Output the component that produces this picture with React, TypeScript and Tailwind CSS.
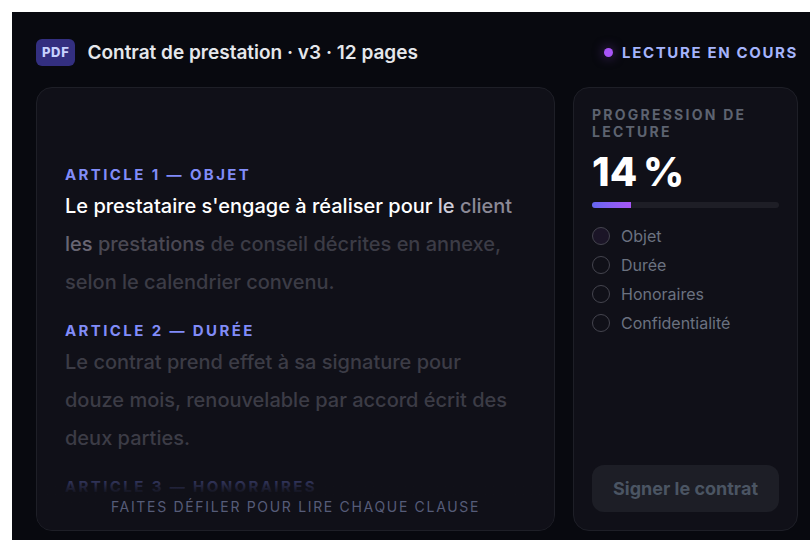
import { useState } from "react";

const ARTICLES = [
  {
    title: "ARTICLE 1 — OBJET",
    parts: [
      { text: "Le prestataire s'engage à réaliser pour ", tone: "text-white" },
      { text: "le ", tone: "text-[#cfcddb]" },
      { text: "client ", tone: "text-[#8b8996]" },
      { text: "les ", tone: "text-[#686673]" },
      { text: "prestations ", tone: "text-[#4a4853]" },
      { text: "de conseil décrites en annexe, ", tone: "text-[#3c3c46]" },
      { text: "selon le calendrier convenu.", tone: "text-[#3c3c46]" },
    ],
  },
  {
    title: "ARTICLE 2 — DURÉE",
    parts: [
      {
        text: "Le contrat prend effet à sa signature pour douze mois, renouvelable par accord écrit des deux parties.",
        tone: "text-[#3c3c46]",
      },
    ],
  },
  { title: "ARTICLE 3 — HONORAIRES", parts: [] },
];

const CLAUSES = [
  { label: "Objet", fill: "bg-[#1b1527]" },
  { label: "Durée", fill: "bg-transparent" },
  { label: "Honoraires", fill: "bg-transparent" },
  { label: "Confidentialité", fill: "bg-transparent" },
];

function Header() {
  return (
    <header className="flex h-[27px] items-center gap-3">
      <span className="flex h-[27px] items-center rounded-md bg-[#332f80] px-[6px] text-[13px] font-extrabold tracking-wider text-[#c7d2fe]">
        PDF
      </span>
      <h1 className="pt-[2px] text-[19px] font-semibold text-[#e5e7eb]">Contrat de prestation · v3 · 12 pages</h1>
      <p className="ml-auto flex items-center gap-[9px] text-[15px] font-bold tracking-[0.11em] text-[#a5b4fc]">
        <span className="h-[9px] w-[9px] rounded-full bg-[#a855f7] shadow-[0_0_12px_#a855f780]" />
        <span className="pt-[2px]">LECTURE EN COURS</span>
      </p>
    </header>
  );
}

function Document() {
  return (
    <section className="relative min-w-0 flex-1 overflow-hidden rounded-2xl border border-[#1e1f27] bg-[#101018]">
      <div className="h-0 min-h-full space-y-[18px] overflow-hidden pt-[75px] pr-9 pl-7">
        {ARTICLES.map((article) => (
          <article key={article.title}>
            <h2 className="text-[15px] leading-6 font-bold tracking-[0.16em] text-[#818cf8]">{article.title}</h2>
            <p className="text-[20px] leading-[38px] font-medium">
              {article.parts.map((part) => (
                <span key={part.text} className={part.tone}>
                  {part.text}
                </span>
              ))}
            </p>
          </article>
        ))}
      </div>
      {/* Fade under the scroll hint */}
      <div className="absolute inset-x-0 bottom-0 flex h-20 items-end justify-center bg-linear-to-t from-[#101018] from-45% to-transparent pb-[13px]">
        <p className="text-[14px] leading-5 tracking-[0.12em] text-[#565c78]">FAITES DÉFILER POUR LIRE CHAQUE CLAUSE</p>
      </div>
    </section>
  );
}

function Progress({ value }: { value: number }) {
  const [read, setRead] = useState<string[]>([]);

  function toggle(clause: string) {
    setRead(read.includes(clause) ? read.filter((c) => c !== clause) : [...read, clause]);
  }

  return (
    <aside className="flex w-[225px] shrink-0 flex-col rounded-2xl border border-[#1e1f27] bg-[#101018] p-[18px]">
      <h2 className="text-[14px] leading-[17px] font-bold tracking-[0.16em] text-[#5d6370]">PROGRESSION DE LECTURE</h2>
      <p className="mt-2 text-[40px] leading-[48px] font-extrabold text-white">{value}{"\u202f"}%</p>
      <div
        role="progressbar"
        aria-label="Progression de lecture"
        aria-valuenow={value}
        className="mt-[6px] h-[6px] overflow-hidden rounded-full bg-[#1e1e26]"
      >
        <div className="h-full w-[21%] bg-linear-to-r from-[#6366f1] to-[#a855f7]" />
      </div>
      <ul className="mt-[18px] space-y-[9px]">
        {CLAUSES.map(({ label, fill }) => (
          <li key={label}>
            <label className="flex items-center gap-[11px] text-[16px] leading-5 text-[#6b7280]">
              <input
                type="checkbox"
                checked={read.includes(label)}
                onChange={() => toggle(label)}
                className={`h-[18px] w-[18px] appearance-none rounded-full border border-[#44444e] checked:bg-[#a855f7] ${fill}`}
              />
              {label}
            </label>
          </li>
        ))}
      </ul>
      <button
        type="button"
        disabled
        className="mt-auto h-[47px] rounded-xl bg-[#1d1e26] text-[18px] font-bold text-[#4b5563]"
      >
        Signer le contrat
      </button>
    </aside>
  );
}

export default function App() {
  return (
    <div className="flex h-screen bg-white pt-3 pl-3 font-[Inter,sans-serif]">
      <main className="flex min-w-0 flex-1 flex-col gap-[21px] bg-[#08090f] pt-[27px] pr-3 pb-[9px] pl-6">
        <Header />
        <div className="flex min-h-0 flex-1 gap-[18px]">
          <Document />
          <Progress value={14} />
        </div>
      </main>
    </div>
  );
}
